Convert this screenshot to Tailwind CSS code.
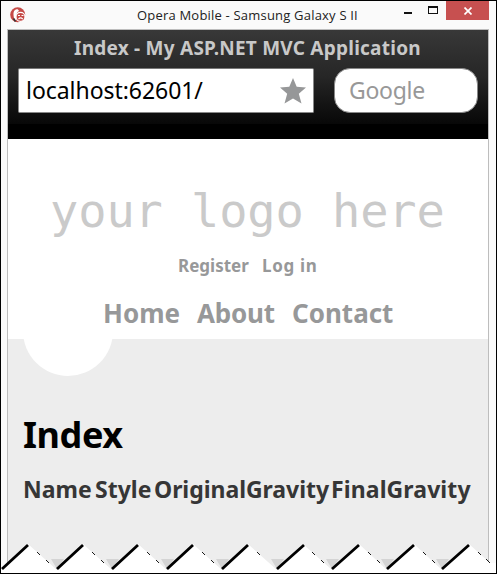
<!DOCTYPE html>
<html lang="en">
<head>
<meta charset="utf-8">
<title>Opera Mobile</title>
<script src="https://cdn.jsdelivr.net/npm/@tailwindcss/browser@4"></script>
</head>
<body class="w-[497px] h-[574px] overflow-hidden font-['Noto_Sans',sans-serif]">
<div class="relative w-[497px] h-[574px] border border-black bg-[#fafafa] flex flex-col whitespace-nowrap">
  <header class="h-7 shrink-0 flex items-start">
    <svg class="ml-[9px] mt-[6px] w-4 h-4 shrink-0" viewBox="0 0 16 16">
      <circle cx="7.7" cy="7.7" r="7.5" fill="#c54a47"/>
      <path d="M6.500 2.300C4 3 3.300 5 3.500 8s1 4.500 2.500 5.200L6 9l1.500-4 1.500-1C8.500 2.500 7.500 2 6.500 2.300z" fill="#fff"/>
      <path d="M3.500 11.500l2 3" stroke="#333" stroke-width="1.500"/>
      <circle cx="10.500" cy="9.800" r="4.500" fill="#c54a47" stroke="#fff" stroke-width="1.200"/>
      <path d="M8 8.500h2M11.500 8.500h2M8.500 12.200q2-2.500 4.300 0" stroke="#fff" stroke-width="1.200" fill="none"/>
    </svg>
    <h1 class="ml-[111px] mt-[4px] w-[220px] text-[13px] leading-5 tracking-[0.2px] text-[#222] font-['Open_Sans',sans-serif]">Opera Mobile - Samsung Galaxy S II</h1>
    <svg class="ml-[46px] mt-[5px] w-9 h-[9px]" viewBox="0 0 36 9" shape-rendering="crispEdges">
      <path d="M1 6h8v2H1z" fill="#111"/>
      <path d="M25 0h10v8H25zM26 2v5h8V2z" fill="#111" fill-rule="evenodd"/>
    </svg>
    <div class="ml-[7px] w-[43px] h-[19px] bg-[#c75050] flex justify-center items-center">
      <svg class="w-2 h-2" viewBox="0 0 8 8"><path d="M.5.5l7 7M7.500.5l-7 7" stroke="#fff" stroke-width="1.700"/></svg>
    </div>
  </header>
  <main class="ml-[6px] w-[482px] h-[544px] shrink-0 border border-[#bdbdbd] bg-white flex flex-col">
    <div class="h-[109px] shrink-0 bg-black">
      <div class="h-[94px] bg-linear-to-b from-[#383838] via-[#262626] to-[#080808] overflow-hidden">
        <p class="h-[38px] pl-[66px] text-[19px] leading-[36px] tracking-[0.24px] font-bold text-[#c8c8c8]">Index - My ASP.NET MVC Application</p>
        <div class="flex pl-[10px]">
          <div class="w-[296px] h-[45px] rounded-[2px] border border-[#888] border-t-[#777] bg-white flex items-center justify-between pl-[7px] pr-[6px]">
            <span class="text-[23px] leading-[43px] tracking-[-0.05px] text-black">localhost:62601/</span>
            <svg class="w-[28px] h-[28px]" viewBox="0 0 28 28"><path d="M14 1l3.700 8.800 9.300.700-7.200 6.200 2.700 9.800L14 21.500 5.500 26.500 8.200 16.700 1 10.500l9.300-.700z" fill="#969798"/></svg>
          </div>
          <div class="ml-[20px] w-[144px] h-[45px] rounded-[16px] border border-[#888] bg-white pl-[14px] text-[23px] leading-[43px] tracking-[-0.3px] text-[#989898]">Google</div>
        </div>
      </div>
    </div>
    <div class="h-[200px] shrink-0 bg-white">
      <div class="h-[117px] pt-[39px] pl-[42px] text-[47px] leading-[66px] tracking-[-0.1px] text-[#cacaca] font-['DejaVu_Sans_Mono',monospace]">your logo here</div>
      <nav class="h-[22px] flex text-[17px] leading-[20px] font-bold text-[#979899]"><a class="ml-[170px] w-[84px]">Register</a><a class="tracking-[0.7px]">Log in</a></nav>
      <nav class="h-[61px] pt-[17px] flex text-[26px] leading-9 font-bold text-[#979899]"><a class="ml-[95px] w-[94px]">Home</a><a class="w-[95px] tracking-[-0.2px]">About</a><a>Contact</a></nav>
    </div>
    <section class="flex-1 bg-[#ededed] overflow-hidden">
      <div class="ml-[15px] h-[37px] flex flex-col justify-end overflow-hidden"><div class="w-[90px] h-[90px] shrink-0 rounded-full bg-white"></div></div>
      <h2 class="mt-[35px] pl-[15px] text-[36px] leading-[48px] tracking-[-0.4px] font-bold text-black">Index</h2>
      <div class="mt-[13px] pl-[15px] flex text-[23px] leading-[34px] font-bold text-[#363636]"><span class="w-[72px]">Name</span><span class="w-[59px]">Style</span><span class="w-[177px] tracking-[-0.05px]">OriginalGravity</span><span class="tracking-[0.1px]">FinalGravity</span></div>
    </section>
  </main>
  <svg class="absolute left-0 top-[541px] w-[495px] h-[31px]" viewBox="1 542 495 31">
    <path d="M51 559H64L57 569zM106 559H119L112 569zM161 559H174L167 569zM216 559H229L222 569zM271 559H284L277 569zM326 559H339L332 569zM381 559H394L387 569zM436 559H449L442 569z" fill="#d4d4d4"/>
    <path d="M1 573V570L28 544 57 570 83 544 112 570 138 544 167 570 193 544 222 570 248 544 277 570 303 544 332 570 359 544 387 570 414 544 442 570 469 544 490 563H496V573z" fill="#fff"/>
    <path d="M2 569L28 545M57 569L83 545M112 569L138 545M167 569L193 545M222 569L248 545M277 569L304 545M332 569L359 545M387 569L414 545M442 569L469 545" stroke="#000" stroke-width="2.800"/>
    <path d="M37 552l3 3M46 560l3 3M92 552l3 3M101 560l3 3M147 552l3 3M156 560l3 3M202 552l3 3M211 560l3 3M257 552l3 3M312 552l3 3M321 560l3 3M368 552l3 3M377 560l3 3M423 552l3 3M432 560l3 3M478 552l3 3M486 559l4 4" stroke="#000" fill="none" stroke-width=".9"/>
  </svg>
</div>
</body>
</html>
